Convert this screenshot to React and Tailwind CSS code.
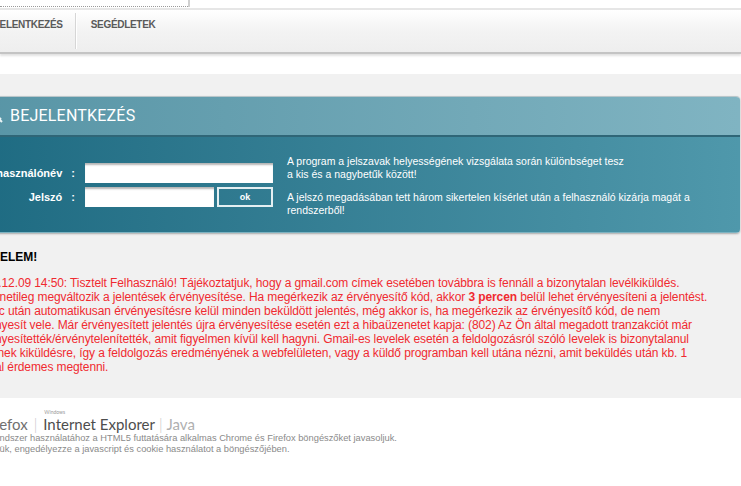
import React from "react";

const noticeLines = [
  ["2013.12.09 14:50: Tisztelt Felhasználó! Tájékoztatjuk, hogy a gmail.com címek esetében továbbra is fennáll a bizonytalan levélkiküldés."],
  ["Átmenetileg megváltozik a jelentések érvényesítése. Ha megérkezik az érvényesítő kód, akkor ", "3 percen", " belül lehet érvényesíteni a jelentést."],
  ["3 perc után automatikusan érvényesítésre kelül minden beküldött jelentés, még akkor is, ha megérkezik az érvényesítő kód, de nem"],
  ["érvényesít vele. Már érvényesített jelentés újra érvényesítése esetén ezt a hibaüzenetet kapja: (802) Az Ön által megadott tranzakciót már"],
  ["érvényesítették/érvénytelenítették, amit figyelmen kívül kell hagyni. Gmail-es levelek esetén a feldolgozásról szóló levelek is bizonytalanul"],
  ["kerülnek kiküldésre, így a feldolgozás eredményének a webfelületen, vagy a küldő programban kell utána nézni, amit beküldés után kb. 1"],
  ["órával érdemes megtenni."],
];

const LoginRow = ({ label, children }) => (
  <div className="flex items-center">
    <div className="w-[95px] flex justify-end items-center gap-[9px] whitespace-nowrap text-[11px] font-bold text-white">
      <span>{label}</span>
      <span>:</span>
    </div>
    <div className="ml-[10px] flex gap-[3px]">{children}</div>
  </div>
);

const App = () => {
  return (
    <div className="w-[741px] h-[486px] overflow-hidden bg-white font-['Liberation_Sans',Arial,sans-serif]">
      {/* search strip above the menu */}
      <div className="h-[8px] flex items-start">
        <div className="w-[188px] h-[7px] border-b border-dotted border-[#9a9a9a]" />
        <div className="w-[2px] h-[7px] bg-[#d0d0d0]" />
      </div>

      {/* main menu */}
      <div className="border-t-2 border-[#e6e6e6] border-b-2 border-b-[#c4c4c4] bg-gradient-to-b from-white via-[#f3f3f3] to-[#eeeeee] h-[46px] shadow-[0_2px_2px_#e2e2e2]">
        <div className="-ml-[34px] flex h-full">
          <div className="pl-[15px] pr-[12px] pt-[7px] text-[10px] font-bold text-[#5a5a5a] tracking-[-0.3px]">BEJELENTKEZÉS</div>
          <div className="my-[3px] w-[2px] border-l border-[#d6d6d6] bg-white" />
          <div className="px-[14px] pt-[7px] text-[10px] font-bold text-[#5a5a5a] tracking-[-0.3px]">SEGÉDLETEK</div>
        </div>
      </div>

      <div className="h-[20px]" />

      <div className="bg-[#f1f1f1] pt-[22px] pb-[24px]">
        {/* login panel */}
        <div className="-ml-[20px] mr-[1px] rounded-r-[4px] border-t border-[#b9c6ca] shadow-[0_1px_2px_rgba(0,0,0,0.3)] overflow-hidden">
          <div className="h-[40px] flex items-center pl-[9px] bg-gradient-to-r from-[#5895a6] to-[#80b4c2] border-b-2 border-[#2f6677]">
            <svg width="14" height="14" viewBox="0 0 14 14" className="mr-[7px]">
              <circle cx="5" cy="5" r="4" fill="none" stroke="#eaf4f6" strokeWidth="2" />
              <path d="M8 8 L13 13 M10.5 10.5 L12 9" stroke="#eaf4f6" strokeWidth="2" />
            </svg>
            <span className="text-[16px] text-white font-['Roboto',Arial,sans-serif] tracking-[0.2px]">BEJELENTKEZÉS</span>
          </div>
          <div className="h-[96px] flex bg-gradient-to-r from-[#1e6b82] to-[#4f98ab] border-b border-[#7eb3c1]">
            <div className="pt-[26px] flex flex-col gap-[4px]">
              <LoginRow label="Felhasználónév">
                <input className="w-[188px] h-[20px] bg-white shadow-[inset_0_3px_2px_-1px_#b5b5b5] outline-none" />
              </LoginRow>
              <LoginRow label="Jelszó">
                <input type="password" className="w-[129px] h-[20px] bg-white shadow-[inset_0_3px_2px_-1px_#b5b5b5] outline-none" />
                <button className="w-[56px] h-[20px] border-2 border-[#e4eff2] text-[9px] font-bold text-white leading-none">ok</button>
              </LoginRow>
            </div>
            <div className="ml-[14px] pt-[18px] text-[10.5px] leading-[12.5px] text-white">
              <p>A program a jelszavak helyességének vizsgálata során különbséget tesz<br />a kis és a nagybetűk között!</p>
              <p className="mt-[11px]">A jelszó megadásában tett három sikertelen kísérlet után a felhasználó kizárja magát a<br />rendszerből!</p>
            </div>
          </div>
        </div>

        {/* notice */}
        <div className="-ml-[28px] mt-[17px]">
          <div className="text-[12px] leading-[14px] font-bold text-black">FIGYELEM!</div>
          <div className="mt-[12px] text-[12px] leading-[14px] tracking-[-0.1px] text-[#f02a30] whitespace-nowrap">
            {noticeLines.map((line, i) => (
              <div key={i}>
                {line.map((part, j) => (j === 1 ? <b key={j}>{part}</b> : <span key={j}>{part}</span>))}
              </div>
            ))}
          </div>
        </div>
      </div>

      {/* supported browsers */}
      <div className="-ml-[17px] pt-[11px]">
        <div className="-ml-[1px] flex items-end font-['Lato',sans-serif] text-[15px] leading-[18px] whitespace-nowrap">
          <span className="text-[#707070]">Firefox</span>
          <span className="mx-[6px] text-[#c4c4c4] font-light">|</span>
          <div className="flex flex-col">
            <span className="text-[5px] leading-[6px] text-[#999] ml-[1px]">Windows</span>
            <span className="text-[#4d4d4d]">Internet Explorer</span>
          </div>
          <span className="mx-[4px] text-[#c4c4c4] font-light">|</span>
          <span className="text-[#b0b0b0]">Java</span>
        </div>
        <div className="text-[9.3px] leading-[11px] text-[#8a8a8a] whitespace-nowrap">
          <div>A rendszer használatához a HTML5 futtatására alkalmas Chrome és Firefox böngészőket javasoljuk.</div>
          <div>Kérjük, engedélyezze a javascript és cookie használatot a böngészőjében.</div>
        </div>
      </div>
    </div>
  );
};

export default App;
